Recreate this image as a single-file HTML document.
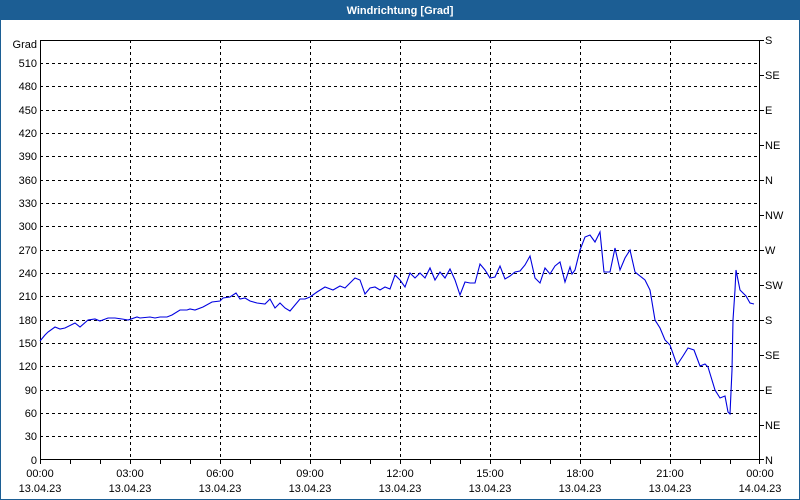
<!DOCTYPE html>
<html><head><meta charset="utf-8"><style>
html,body{margin:0;padding:0;background:#fff;}
svg{display:block;}
text{font-family:"Liberation Sans",sans-serif;font-size:11px;fill:#000;}
</style></head><body>
<svg width="800" height="500" xmlns="http://www.w3.org/2000/svg">
<rect x="0" y="0" width="800" height="500" fill="#fff"/>
<rect x="0.5" y="0.5" width="799" height="499" fill="none" stroke="#1c5e94"/>
<rect x="0" y="0" width="800" height="20" fill="#1c5e94"/>
<text x="400" y="14" text-anchor="middle" style="fill:#fff;font-weight:bold;font-size:11px">Windrichtung [Grad]</text>
<g stroke="#000" stroke-width="1" stroke-dasharray="3,3" shape-rendering="crispEdges">
<line x1="40" y1="63.5" x2="760" y2="63.5"/><line x1="40" y1="86.5" x2="760" y2="86.5"/><line x1="40" y1="110.5" x2="760" y2="110.5"/><line x1="40" y1="133.5" x2="760" y2="133.5"/><line x1="40" y1="156.5" x2="760" y2="156.5"/><line x1="40" y1="180.5" x2="760" y2="180.5"/><line x1="40" y1="203.5" x2="760" y2="203.5"/><line x1="40" y1="226.5" x2="760" y2="226.5"/><line x1="40" y1="250.5" x2="760" y2="250.5"/><line x1="40" y1="273.5" x2="760" y2="273.5"/><line x1="40" y1="296.5" x2="760" y2="296.5"/><line x1="40" y1="320.5" x2="760" y2="320.5"/><line x1="40" y1="343.5" x2="760" y2="343.5"/><line x1="40" y1="366.5" x2="760" y2="366.5"/><line x1="40" y1="390.5" x2="760" y2="390.5"/><line x1="40" y1="413.5" x2="760" y2="413.5"/><line x1="40" y1="436.5" x2="760" y2="436.5"/>
<line x1="130.5" y1="40" x2="130.5" y2="460"/><line x1="220.5" y1="40" x2="220.5" y2="460"/><line x1="310.5" y1="40" x2="310.5" y2="460"/><line x1="400.5" y1="40" x2="400.5" y2="460"/><line x1="490.5" y1="40" x2="490.5" y2="460"/><line x1="580.5" y1="40" x2="580.5" y2="460"/><line x1="670.5" y1="40" x2="670.5" y2="460"/>
</g>
<g stroke="#000" stroke-width="1" shape-rendering="crispEdges" fill="none">
<rect x="40.5" y="40.5" width="719" height="419"/>
<path d="M40.5 460v4M70.5 460v4M100.5 460v4M130.5 460v4M160.5 460v4M190.5 460v4M220.5 460v4M250.5 460v4M280.5 460v4M310.5 460v4M340.5 460v4M370.5 460v4M400.5 460v4M430.5 460v4M460.5 460v4M490.5 460v4M520.5 460v4M550.5 460v4M580.5 460v4M610.5 460v4M640.5 460v4M670.5 460v4M700.5 460v4M730.5 460v4M759.5 460v4"/>
<path d="M760 40.5h4M760 75.5h4M760 110.5h4M760 145.5h4M760 180.5h4M760 215.5h4M760 250.5h4M760 285.5h4M760 320.5h4M760 355.5h4M760 390.5h4M760 425.5h4M760 459.5h4"/>
</g>
<g text-anchor="end">
<text x="37" y="48">Grad</text>
<text x="37" y="67">510</text><text x="37" y="90">480</text><text x="37" y="114">450</text><text x="37" y="137">420</text><text x="37" y="160">390</text><text x="37" y="184">360</text><text x="37" y="207">330</text><text x="37" y="230">300</text><text x="37" y="254">270</text><text x="37" y="277">240</text><text x="37" y="300">210</text><text x="37" y="324">180</text><text x="37" y="347">150</text><text x="37" y="370">120</text><text x="37" y="394">90</text><text x="37" y="417">60</text><text x="37" y="440">30</text><text x="37" y="464">0</text>
</g>
<g>
<text x="765" y="44">S</text><text x="765" y="79">SE</text><text x="765" y="114">E</text><text x="765" y="149">NE</text><text x="765" y="184">N</text><text x="765" y="219">NW</text><text x="765" y="254">W</text><text x="765" y="289">SW</text><text x="765" y="324">S</text><text x="765" y="359">SE</text><text x="765" y="394">E</text><text x="765" y="429">NE</text><text x="765" y="464">N</text>
</g>
<g text-anchor="middle">
<text x="40" y="477">00:00</text><text x="130" y="477">03:00</text><text x="220" y="477">06:00</text><text x="310" y="477">09:00</text><text x="400" y="477">12:00</text><text x="490" y="477">15:00</text><text x="580" y="477">18:00</text><text x="670" y="477">21:00</text><text x="760" y="477">00:00</text>
<text x="40" y="492">13.04.23</text><text x="130" y="492">13.04.23</text><text x="220" y="492">13.04.23</text><text x="310" y="492">13.04.23</text><text x="400" y="492">13.04.23</text><text x="490" y="492">13.04.23</text><text x="580" y="492">13.04.23</text><text x="670" y="492">13.04.23</text><text x="760" y="492">14.04.23</text>
</g>
<polyline fill="none" stroke="#0000e0" stroke-width="1.1" points="40,341 45,335 48,332 55,327 60,329 65,328 75,323 80,327 88,320 95,319 100,321 108,318 115,318 122,319 128,320 137,317 140,318 150,317 155,318 160,317 167,317 172,315 180,310 187,310 190,309 195,310 203,307 212,302 220,301 223,298 230,297 236,293 240,299 245,298 250,301 257,303 265,304 270,299 275,308 280,303 285,308 290,311 300,299 305,299 310,297 317,292 325,287 333,290 340,286 345,288 355,278 360,280 365,294 370,288 375,287 380,290 385,287 390,289 395,275 400,280 405,287 410,273 415,278 420,273 425,278 430,268 435,280 440,272 445,278 450,269 455,280 460,295 465,282 470,283 475,283 480,264 485,270 490,278 495,277 500,266 505,279 510,276 515,272 520,271 525,265 530,256 535,278 540,283 545,268 550,274 555,266 560,262 565,282 570,267 572,274 575,270 580,250 585,237 590,235 595,242 600,232 604,272 610,272 615,248 620,270 625,258 630,250 635,272 645,280 650,290 655,320 660,328 665,340 670,345 677,365 683,356 688,348 694,350 700,366 705,364 708,367 715,390 720,398 725,396 728,412 730,414 732,370 733,320 735,290 736,270 740,290 746,296 750,303 754,304"/>
</svg>
</body></html>
